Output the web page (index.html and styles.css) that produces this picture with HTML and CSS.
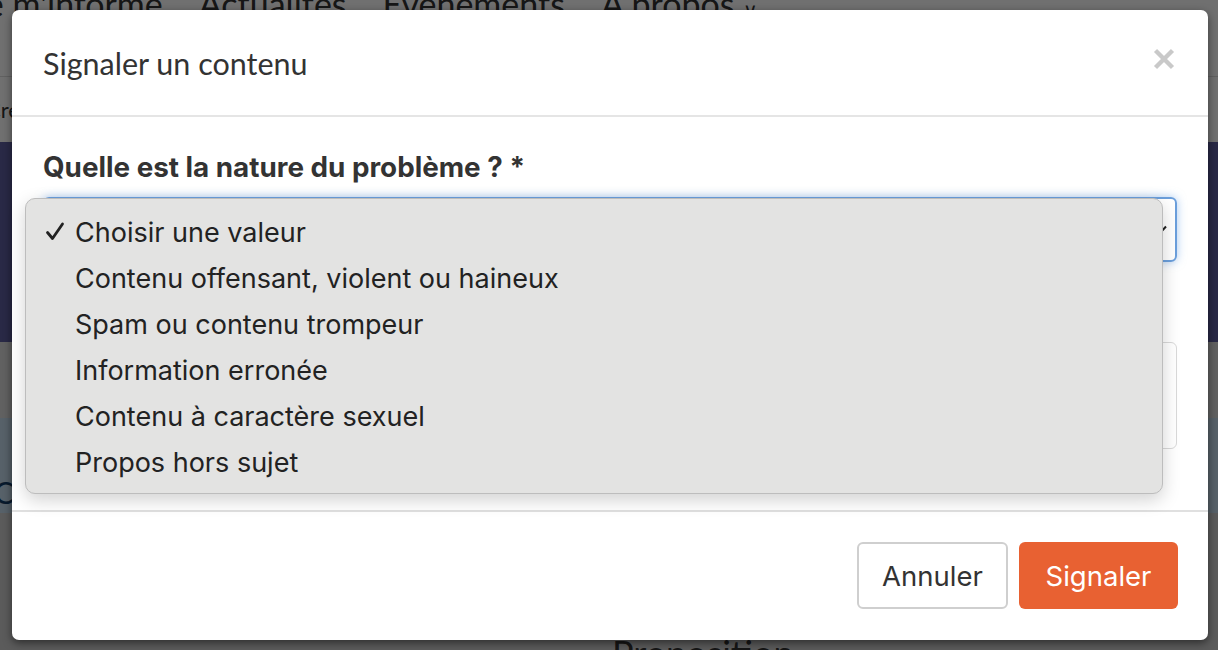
FILE: index.html
```html
<!DOCTYPE html>
<html lang="fr">
<head>
<meta charset="utf-8">
<title>Signaler un contenu</title>
<link rel="stylesheet" href="styles.css">
</head>
<body>
<div class="page">
  <nav class="topnav">
    <span class="nav-item">Je m'informe</span>
    <span class="nav-item">Actualités</span>
    <span class="nav-item">Évènements</span>
    <span class="nav-item">À propos <span class="caret">∨</span></span>
  </nav>
  <div class="subbar"><span class="crumb">Créer une proposition</span></div>
  <section class="hero"></section>
  <section class="band"></section>
  <section class="info"><span class="crumb">Contributions</span></section>
  <section class="content"><h2 class="section-title">Proposition</h2></section>
</div>

<div class="backdrop"></div>

<div class="modal" role="dialog" aria-labelledby="modal-title">
  <header class="modal-header">
    <h1 id="modal-title" class="modal-title">Signaler un contenu</h1>
    <button class="close" aria-label="Fermer">
      <svg width="22" height="22" viewBox="0 0 22 22"><path d="M2.5 2.5 L19.5 19.5 M19.5 2.5 L2.5 19.5" stroke="#c9c9c9" stroke-width="4.4" stroke-linecap="butt"/></svg>
    </button>
  </header>
  <div class="modal-body">
    <label class="field-label">Quelle est la nature du problème ? *</label>
    <div class="select">
      <span class="select-value">Choisir une valeur</span>
      <svg class="select-chevron" width="16" height="10" viewBox="0 0 16 10"><path d="M2 1.5 L8 8 L14 1.5" fill="none" stroke="#222" stroke-width="2"/></svg>
    </div>
    <label class="field-label hidden-label">Commentaire</label>
    <div class="textarea"></div>
  </div>
  <footer class="modal-footer">
    <button class="btn btn-default">Annuler</button>
    <button class="btn btn-primary">Signaler</button>
  </footer>
</div>

<ul class="dropdown-menu" role="listbox">
  <li class="option selected"><span class="check"><svg width="20" height="20" viewBox="0 0 20 20"><path d="M2.5 10.5 L7.5 16.5 L17.5 2" fill="none" stroke="#222" stroke-width="2.8" stroke-linecap="round" stroke-linejoin="round"/></svg></span>Choisir une valeur</li>
  <li class="option"><span class="check"></span>Contenu offensant, violent ou haineux</li>
  <li class="option"><span class="check"></span>Spam ou contenu trompeur</li>
  <li class="option"><span class="check"></span>Information erronée</li>
  <li class="option"><span class="check"></span>Contenu à caractère sexuel</li>
  <li class="option"><span class="check"></span>Propos hors sujet</li>
</ul>
</body>
</html>
```
FILE: styles.css
```css
* { box-sizing: border-box; }
html, body { margin: 0; padding: 0; }
body {
  width: 1218px;
  height: 650px;
  overflow: hidden;
  position: relative;
  font-family: "Inter", "Liberation Sans", sans-serif;
  color: #333;
  background: #fff;
}

/* Page behind the modal */
.page { display: flex; flex-direction: column; }
.topnav {
  height: 91px;
  margin-top: -14px;
  margin-left: -28px;
  display: flex;
  gap: 36px;
  font-family: "Lato", sans-serif;
  font-size: 34px;
  line-height: 36px;
  color: #333;
  border-bottom: 1px solid #ddd;
  white-space: nowrap;
}
.caret { font-size: 20px; }
.subbar {
  height: 65px;
  display: flex;
  align-items: center;
  font-family: "Lato", sans-serif;
  font-size: 22px;
  color: #333;
}
.crumb {
  white-space: nowrap;
  flex: none;
  margin-left: -14px;
}
.hero { height: 200px; background: #5f5d9f; }
.band { height: 76px; background: #dcdcdc; }
.info {
  height: 95px;
  background: #c6dcef;
  display: flex;
  align-items: flex-end;
  padding-bottom: 4px;
  font-family: "Lato", sans-serif;
  font-size: 30px;
  line-height: 34px;
  color: #143c66;
}
.info .crumb { margin-left: -6px; }
.content { background: #d0d0d0; height: 200px; padding-left: 612px; }
.section-title {
  margin: 0;
  padding-top: 118px;
  font-family: "Lato", sans-serif;
  font-weight: 400;
  font-size: 36px;
  color: #333;
}

.backdrop {
  position: absolute;
  inset: 0;
  background: rgba(0, 0, 0, 0.56);
}

/* Modal */
.modal {
  position: absolute;
  left: 12px;
  top: 10px;
  width: 1196px;
  height: 630px;
  background: #fff;
  border-radius: 7px;
  box-shadow: 0 3px 9px rgba(0, 0, 0, 0.5);
  display: flex;
  flex-direction: column;
}
.modal-header {
  height: 107px;
  border-bottom: 2px solid #e5e5e5;
  display: flex;
  align-items: center;
  justify-content: space-between;
  padding: 0 32px 0 31px;
}
.modal-title {
  margin: 0;
  font-family: "Lato", sans-serif;
  font-weight: 400;
  font-size: 30.5px;
  color: #333;
}
.close {
  background: none;
  border: 0;
  padding: 0;
  width: 24px;
  height: 24px;
  margin-bottom: 7px;
  display: flex;
  align-items: center;
  justify-content: center;
}
.modal-body {
  flex: 1;
  padding: 34px 31px 0 31px;
  display: flex;
  flex-direction: column;
}
.field-label {
  font-weight: 700;
  font-size: 27.8px;
  line-height: 32px;
  color: #333;
  margin-bottom: 14px;
}
.hidden-label { visibility: hidden; margin: 0; }
.select {
  height: 65px;
  border: 2px solid #6b9fdc;
  border-radius: 6px;
  box-shadow: 0 0 10px rgba(102, 160, 230, 0.55);
  display: flex;
  align-items: center;
  justify-content: space-between;
  padding: 0 7px 0 20px;
  font-size: 24px;
  margin-bottom: 15px;
}
.textarea {
  margin-top: 33px;
  height: 107px;
  border: 1px solid #d9d9d9;
  border-radius: 6px;
}
.modal-footer {
  border-top: 2px solid #e0e0e0;
  display: flex;
  justify-content: flex-end;
  gap: 11px;
  padding: 30px 30px 31px;
}
.btn {
  height: 67px;
  border-radius: 6px;
  font-family: "Inter", "Liberation Sans", sans-serif;
  font-size: 27.5px;
  padding: 0;
}
.btn-default {
  width: 151px;
  background: #fff;
  border: 2px solid #cfcfcf;
  color: #333;
}
.btn-primary {
  width: 159px;
  background: #e86132;
  border: 0;
  color: #fff;
}

/* Native select dropdown */
.dropdown-menu {
  position: absolute;
  left: 25px;
  top: 198px;
  width: 1138px;
  height: 296px;
  margin: 0;
  padding: 10px 0 9px 19px;
  list-style: none;
  background: #e3e3e2;
  border: 1px solid #bdbdbd;
  border-radius: 10px;
  box-shadow: 0 6px 18px rgba(0, 0, 0, 0.18);
}
.option {
  height: 46px;
  display: flex;
  align-items: center;
  font-family: "Inter", "Liberation Sans", sans-serif;
  font-size: 27px;
  color: #222;
}
.check {
  width: 30px;
  flex: none;
  display: flex;
  align-items: center;
}
```
